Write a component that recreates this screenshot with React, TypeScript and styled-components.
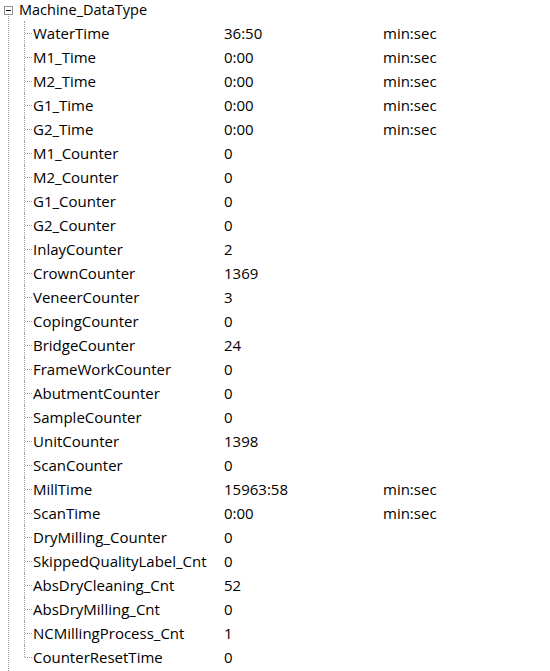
import { FC } from 'react';
import styled, { createGlobalStyle } from 'styled-components';

type Field = {
	name: string;
	value: string;
	unit?: string;
};

const fields: Field[] = [
	{ name: 'WaterTime', value: '36:50', unit: 'min:sec' },
	{ name: 'M1_Time', value: '0:00', unit: 'min:sec' },
	{ name: 'M2_Time', value: '0:00', unit: 'min:sec' },
	{ name: 'G1_Time', value: '0:00', unit: 'min:sec' },
	{ name: 'G2_Time', value: '0:00', unit: 'min:sec' },
	{ name: 'M1_Counter', value: '0' },
	{ name: 'M2_Counter', value: '0' },
	{ name: 'G1_Counter', value: '0' },
	{ name: 'G2_Counter', value: '0' },
	{ name: 'InlayCounter', value: '2' },
	{ name: 'CrownCounter', value: '1369' },
	{ name: 'VeneerCounter', value: '3' },
	{ name: 'CopingCounter', value: '0' },
	{ name: 'BridgeCounter', value: '24' },
	{ name: 'FrameWorkCounter', value: '0' },
	{ name: 'AbutmentCounter', value: '0' },
	{ name: 'SampleCounter', value: '0' },
	{ name: 'UnitCounter', value: '1398' },
	{ name: 'ScanCounter', value: '0' },
	{ name: 'MillTime', value: '15963:58', unit: 'min:sec' },
	{ name: 'ScanTime', value: '0:00', unit: 'min:sec' },
	{ name: 'DryMilling_Counter', value: '0' },
	{ name: 'SkippedQualityLabel_Cnt', value: '0' },
	{ name: 'AbsDryCleaning_Cnt', value: '52' },
	{ name: 'AbsDryMilling_Cnt', value: '0' },
	{ name: 'NCMillingProcess_Cnt', value: '1' },
	{ name: 'CounterResetTime', value: '0' },
];

const GlobalStyle = createGlobalStyle`
	html, body {
		margin: 0;
		padding: 0;
		background: #ffffff;
	}

	body {
		font-family: 'Open Sans', 'Noto Sans', sans-serif;
		color: #000000;
	}
`;

const App: FC = () => {
	return (
		<>
			<GlobalStyle />
			<Tree>
				<RootNode>
					<RootRow>
						<Expander />
						<RootLabel>Machine_DataType</RootLabel>
					</RootRow>
					<Children>
						{fields.map((f) => (
							<ChildRow key={f.name}>
								<Name>{f.name}</Name>
								<Value>{f.value}</Value>
								<Unit>{f.unit}</Unit>
							</ChildRow>
						))}
					</Children>
				</RootNode>
			</Tree>
		</>
	);
};

const lineColor = '#a0a0a0';

export const Tree = styled.div`
	min-height: 100vh;
	overflow: hidden;
	font-size: 15px;
`;

export const RootNode = styled.div`
	position: relative;

	&::before {
		content: '';
		position: absolute;
		left: 8px;
		top: 13px;
		height: 100vh;
		border-left: 1px dotted ${lineColor};
	}
`;

export const RootRow = styled.div`
	display: flex;
	align-items: center;
	height: 22px;
	padding-left: 4px;
	margin-top: -1px;
`;

export const Expander = styled.span`
	position: relative;
	box-sizing: border-box;
	width: 9px;
	height: 9px;
	margin-right: 6px;
	border: 1px solid #919191;
	background: #ffffff;
	z-index: 1;

	&::after {
		content: '';
		position: absolute;
		left: 1px;
		top: 3px;
		width: 5px;
		height: 1px;
		background: #000000;
	}
`;

export const RootLabel = styled.span`
	font-size: 14.5px;
	line-height: 22px;
	white-space: nowrap;
`;

export const Children = styled.div`
	display: flex;
	flex-direction: column;
	padding-left: 24px;
`;

export const ChildRow = styled.div`
	position: relative;
	display: grid;
	grid-template-columns: 191px 159px auto;
	align-items: center;
	height: 24px;
	padding-left: 9px;
	white-space: nowrap;

	&::before {
		content: '';
		position: absolute;
		left: 0;
		top: 0;
		bottom: 0;
		border-left: 1px dotted ${lineColor};
	}

	&:last-child::before {
		bottom: 12px;
	}

	&::after {
		content: '';
		position: absolute;
		left: 1px;
		top: 12px;
		width: 7px;
		border-top: 1px dotted ${lineColor};
	}
`;

export const Name = styled.span``;

export const Value = styled.span``;

export const Unit = styled.span``;

export default App;
